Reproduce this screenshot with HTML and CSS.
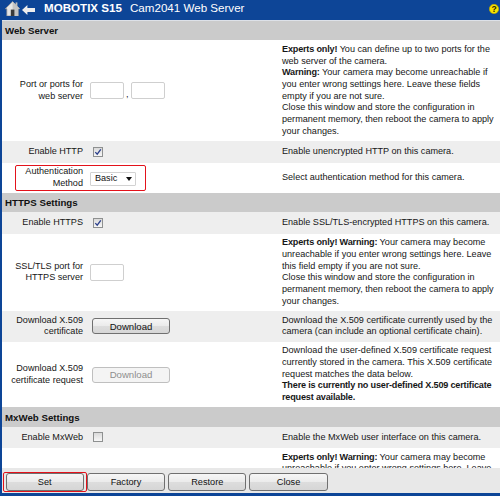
FILE: index.html
```html
<!DOCTYPE html>
<html lang="en">
<head>
<meta charset="utf-8">
<title>Cam2041 Web Server</title>
<link rel="stylesheet" href="styles.css">
</head>
<body>
<header class="topbar">
  <svg class="home" width="15" height="15" viewBox="0 0 15 15">
    <path d="M7.6 0.6 L14.8 7.8 L13.2 7.8 L13.2 15 L1.8 15 L1.8 7.8 L0.2 7.8 Z" fill="#e6e6e6" stroke="#8c8c8c" stroke-width="0.7"/>
    <path d="M7.6 0.6 L14.8 7.8 L13.2 7.8 L13.2 15 L7.6 15 Z" fill="#c4c4c4"/>
    <rect x="10.6" y="1.4" width="1.8" height="3.6" fill="#bdbdbd"/>
    <rect x="5.8" y="8.6" width="3.6" height="6.4" fill="#3a3a3a"/>
  </svg>
  <svg class="back" width="13" height="10" viewBox="0 0 13 10">
    <path d="M0 5 L5.4 0 L5.4 2.9 L13 2.9 L13 7.1 L5.4 7.1 L5.4 10 Z" fill="#ededed"/>
  </svg>
  <h1 class="title"><b>MOBOTIX S15</b><span class="cam">Cam2041 Web Server</span></h1>
  <svg class="help" width="10" height="10" viewBox="0 0 10 10">
    <circle cx="5" cy="5" r="4.7" fill="#f6e200" stroke="#b9a400" stroke-width="0.6"/>
    <text x="5" y="8.3" text-anchor="middle" class="help-q">?</text>
  </svg>
</header>

<main class="content">
  <table class="form">
    <colgroup><col class="c1"><col class="c2"><col class="c3"></colgroup>
    <tr class="section"><th colspan="3">Web Server</th></tr>
    <tr>
      <td class="lbl">Port or ports for web server</td>
      <td class="ctl"><div class="ctrl"><input class="port" type="text"><span class="comma">,</span><input class="port" type="text"></div></td>
      <td class="desc"><b>Experts only!</b> You can define up to two ports for the web server of the camera.<br><b>Warning:</b> Your camera may become unreachable if you enter wrong settings here. Leave these fields empty if you are not sure.<br>Close this window and store the configuration in permanent memory, then reboot the camera to apply your changes.</td>
    </tr>
    <tr class="alt single">
      <td class="lbl">Enable HTTP</td>
      <td class="ctl"><div class="ctrl"><span class="chk"><svg width="8" height="8" viewBox="0 0 8 8"><path d="M1.3 4.1 L3.2 6.2 L6.8 1.3" fill="none" stroke="#2b3f8c" stroke-width="1.3"/></svg></span></div></td>
      <td class="desc">Enable unencrypted HTTP on this camera.</td>
    </tr>
    <tr>
      <td class="lbl">Authentication Method</td>
      <td class="ctl"><div class="ctrl"><span class="select"><span class="sel-text">Basic</span><svg class="sel-arrow" width="6" height="4" viewBox="0 0 6 4"><path d="M0 0 L6 0 L3 4 Z" fill="#111"/></svg></span></div></td>
      <td class="desc">Select authentication method for this camera.</td>
    </tr>

    <tr class="section"><th colspan="3">HTTPS Settings</th></tr>
    <tr class="alt single">
      <td class="lbl">Enable HTTPS</td>
      <td class="ctl"><div class="ctrl"><span class="chk"><svg width="8" height="8" viewBox="0 0 8 8"><path d="M1.3 4.1 L3.2 6.2 L6.8 1.3" fill="none" stroke="#2b3f8c" stroke-width="1.3"/></svg></span></div></td>
      <td class="desc">Enable SSL/TLS-encrypted HTTPS on this camera.</td>
    </tr>
    <tr>
      <td class="lbl">SSL/TLS port for HTTPS server</td>
      <td class="ctl"><div class="ctrl"><input class="port" type="text"></div></td>
      <td class="desc"><b>Experts only! Warning:</b> Your camera may become unreachable if you enter wrong settings here. Leave this field empty if you are not sure.<br>Close this window and store the configuration in permanent memory, then reboot the camera to apply your changes.</td>
    </tr>
    <tr class="alt">
      <td class="lbl">Download X.509 certificate</td>
      <td class="ctl"><div class="ctrl"><button class="btn dl" type="button">Download</button></div></td>
      <td class="desc">Download the X.509 certificate currently used by the camera (can include an optional certificate chain).</td>
    </tr>
    <tr>
      <td class="lbl">Download X.509 certificate request</td>
      <td class="ctl"><div class="ctrl"><button class="btn dl" type="button" disabled>Download</button></div></td>
      <td class="desc">Download the user-defined X.509 certificate request currently stored in the camera. This X.509 certificate request matches the data below.<br><b>There is currently no user-defined X.509 certificate request available.</b></td>
    </tr>

    <tr class="section"><th colspan="3">MxWeb Settings</th></tr>
    <tr class="alt single">
      <td class="lbl">Enable MxWeb</td>
      <td class="ctl"><div class="ctrl"><span class="chk"></span></div></td>
      <td class="desc">Enable the MxWeb user interface on this camera.</td>
    </tr>
    <tr>
      <td class="lbl">MxWeb port</td>
      <td class="ctl"><div class="ctrl"><input class="port" type="text"></div></td>
      <td class="desc"><b>Experts only! Warning:</b> Your camera may become unreachable if you enter wrong settings here. Leave this field empty if you are not sure.<br>Close this window and store the configuration in permanent memory, then reboot the camera to apply your changes.</td>
    </tr>
  </table>
</main>

<footer class="bar">
  <button class="btn fbtn" type="button">Set</button>
  <button class="btn fbtn" type="button">Factory</button>
  <button class="btn fbtn" type="button">Restore</button>
  <button class="btn fbtn" type="button">Close</button>
</footer>

<div class="mark mark-auth"></div>
<div class="mark mark-set"></div>
</body>
</html>
```

FILE: styles.css
```css
html, body {
  margin: 0;
  padding: 0;
}

body {
  position: relative;
  width: 500px;
  height: 496px;
  box-sizing: border-box;
  border-left: 2px solid #0d4597;
  border-bottom: 3px solid #0d4597;
  display: flex;
  flex-direction: column;
  overflow: hidden;
  background: #ffffff;
  font-family: "Liberation Sans", Arial, sans-serif;
  font-size: 9.1px;
  color: #161616;
}

/* top bar */
.topbar {
  flex: none;
  height: 20px;
  background: #0d4597;
  border-bottom: 1px solid #dde1e8;
  display: flex;
  align-items: flex-start;
}

.home {
  margin: 1px 0 0 3px;
  flex: none;
}

.back {
  margin: 4.5px 0 0 2px;
  flex: none;
}

.title {
  margin: 0 0 0 9px;
  font-size: 11.6px;
  line-height: 16px;
  font-weight: normal;
  color: #ffffff;
  white-space: nowrap;
}

.title b {
  font-weight: bold;
}

.title .cam {
  margin-left: 8px;
}

.help {
  margin: 4px 1px 0 auto;
  flex: none;
}

.help-q {
  font-family: "Liberation Sans", Arial, sans-serif;
  font-size: 8.5px;
  font-weight: bold;
  fill: #2a2400;
}

/* content */
.content {
  flex: 1;
  min-height: 0;
  overflow: hidden;
}

.form {
  width: 498px;
  border-collapse: collapse;
  table-layout: fixed;
}

.c1 { width: 86px; }
.c2 { width: 188px; }
.c3 { width: 224px; }

.form td {
  padding: 3.6px 0;
  vertical-align: middle;
  line-height: 11.7px;
}

.form .lbl {
  text-align: right;
  padding-right: 5px;
}

.form .ctl {
  padding-left: 2px;
}

.form .desc {
  padding-left: 6px;
  padding-right: 4px;
}

.desc b {
  letter-spacing: -0.18px;
}

.section th {
  height: 19.3px;
  padding: 0 0 0 3px;
  text-align: left;
  font-size: 9.7px;
  font-weight: bold;
  background: #cbcbcb;
  color: #111;
}

.alt td {
  background: #eeeeee;
}

.single {
  height: 21.4px;
}

.ctrl {
  display: flex;
  align-items: center;
}

.port {
  width: 34px;
  height: 17px;
  box-sizing: border-box;
  margin: 0;
  padding: 0;
  border: 1px solid #cfcfcf;
  border-radius: 2px;
  background: #ffffff;
}

.comma {
  align-self: flex-end;
  margin: 0 2px -1px 2px;
  line-height: 11px;
}

.chk {
  display: inline-flex;
  align-items: center;
  justify-content: center;
  width: 10px;
  height: 10px;
  box-sizing: border-box;
  margin-left: 3px;
  border: 1px solid #8e9090;
  background: linear-gradient(#dadada, #f7f7f7);
}

.select {
  display: inline-flex;
  align-items: center;
  justify-content: space-between;
  width: 46px;
  height: 14px;
  box-sizing: border-box;
  margin-top: 2px;
  padding: 0 3px 0 4px;
  border: 1px solid #d2d2d2;
  border-radius: 1px;
  background: #ffffff;
  color: #111;
}

/* buttons */
.btn {
  font-family: "Liberation Sans", Arial, sans-serif;
  font-size: 9.6px;
  color: #111;
  padding: 0;
  border: 1px solid #707070;
  border-radius: 3px;
  background: linear-gradient(#f6f6f6 0%, #ebebeb 50%, #dddddd 51%, #d6d6d6 100%);
}

.btn.dl {
  width: 78px;
  height: 16px;
  margin-left: 2px;
}

.btn:disabled {
  border-color: #bfbfbf;
  background: #f4f4f4;
  color: #8e8e8e;
}

.bar {
  flex: none;
  height: 25px;
  box-sizing: border-box;
  padding: 5px 0 0 3.5px;
  display: flex;
  align-items: flex-start;
  gap: 3px;
  background: #e8e8e8;
}

.fbtn {
  width: 78.3px;
  height: 18px;
  font-size: 9.2px;
}

/* annotation overlays */
.mark {
  position: absolute;
  box-sizing: border-box;
  border: 1.8px solid #e3121b;
  border-radius: 2px;
  pointer-events: none;
}

.mark-auth {
  left: 13px;
  top: 164.7px;
  width: 131px;
  height: 26px;
}

.mark-set {
  left: 1.3px;
  top: 471.7px;
  width: 84px;
  height: 20px;
}
```
